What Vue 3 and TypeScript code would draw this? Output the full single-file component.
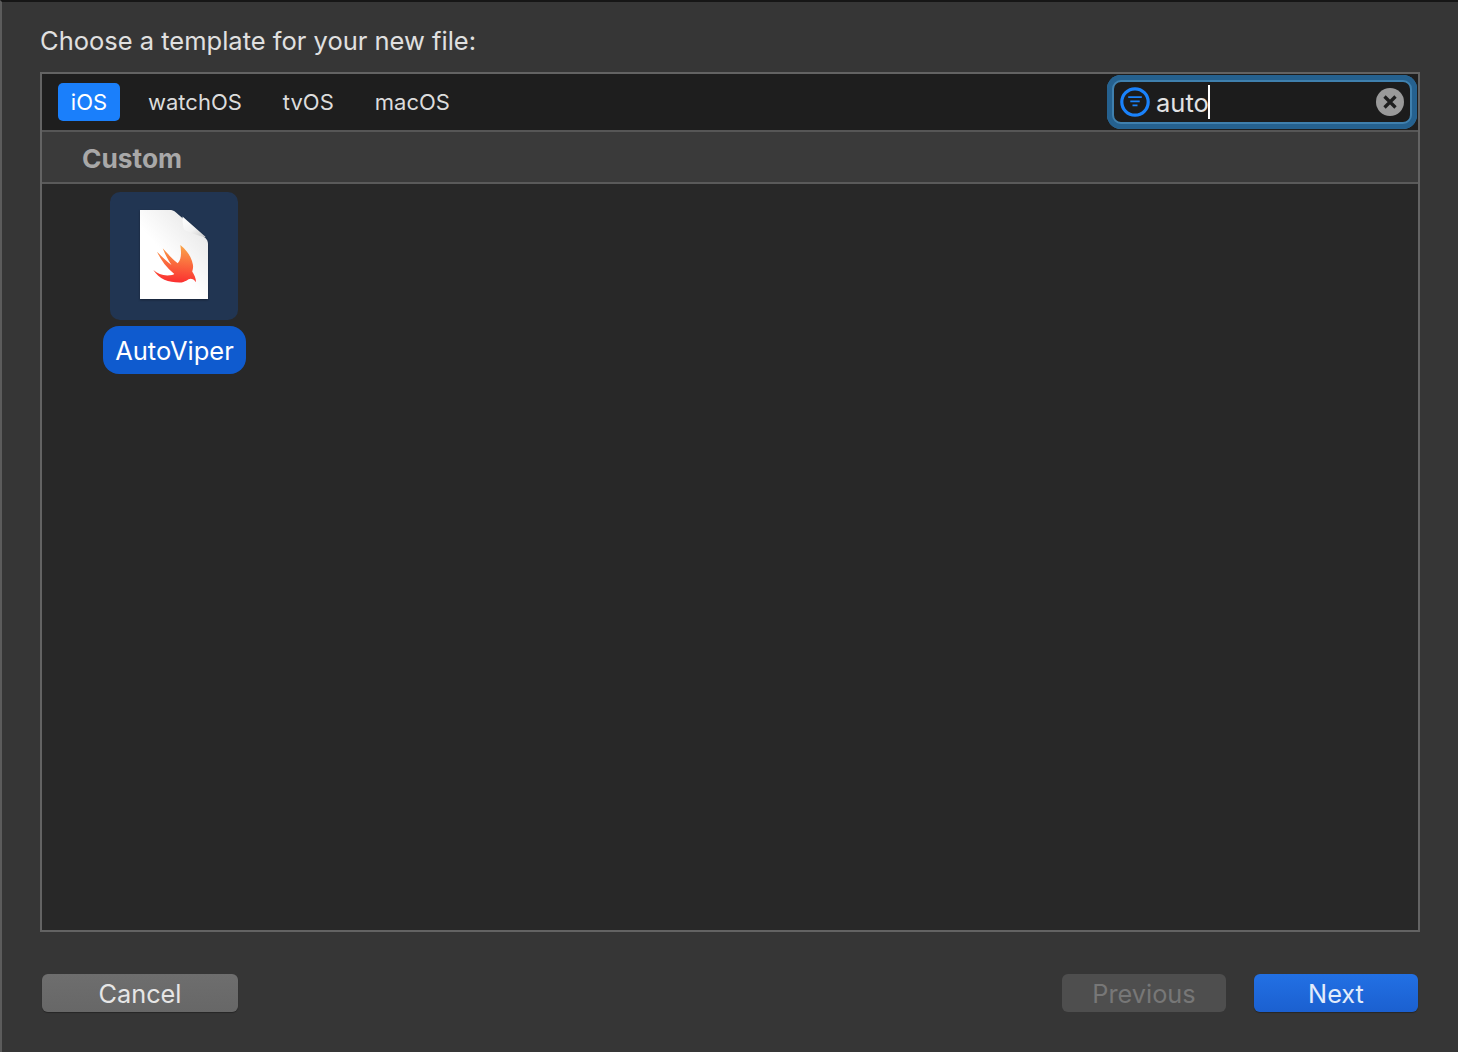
<script setup lang="ts">
const platforms: string[] = ['iOS', 'watchOS', 'tvOS', 'macOS']
</script>

<template>
  <div class="sheet">
    <h1 class="title">Choose a template for your new file:</h1>
    <section class="panel">
      <div class="tabbar">
        <div class="tabs">
          <span v-for="(p, i) in platforms" :key="p" class="tab" :class="{ active: i === 0 }">{{ p }}</span>
        </div>
        <div class="search">
          <svg class="filter" width="30" height="30" viewBox="0 0 30 30">
            <circle cx="15" cy="15" r="13.2" fill="none" stroke="#1a82fb" stroke-width="3.2" />
            <path d="M8.200 10.200h13.600M10.300 14.300h9.400M12.500 18.400h5" stroke="#1a82fb" stroke-width="1.800" fill="none" />
          </svg>
          <span class="query">auto<i class="caret"></i></span>
          <svg class="clear" width="28" height="28" viewBox="0 0 28 28">
            <circle cx="14" cy="14" r="14" fill="#9a9a9a" />
            <path d="M8.500 8.500l11 11M19.500 8.500l-11 11" stroke="#1e1e1e" stroke-width="3.300" fill="none" />
          </svg>
        </div>
      </div>
      <div class="group">Custom</div>
      <div class="grid">
        <div class="item">
          <div class="tile">
            <svg width="70" height="92" viewBox="0 0 70 92">
              <defs>
                <linearGradient id="swift" x1="0.6" y1="0" x2="0.5" y2="1">
                  <stop offset="0" stop-color="#faa64a" />
                  <stop offset="1" stop-color="#fb2e30" />
                </linearGradient>
                <linearGradient id="fold" x1="0" y1="0" x2="1" y2="1">
                  <stop offset="0" stop-color="#ffffff" />
                  <stop offset="0.55" stop-color="#f1f1f1" />
                  <stop offset="1" stop-color="#c8c8c8" />
                </linearGradient>
                <linearGradient id="page" x1="0.7" y1="0" x2="0.3" y2="0.45">
                  <stop offset="0" stop-color="#e9e9e9" />
                  <stop offset="1" stop-color="#ffffff" />
                </linearGradient>
              </defs>
              <path d="M1 1h29c3 0 5 .5 7 2.500l27 23.500c3 2.500 5 4 5 8V90H1z" fill="url(#page)" />
              <path d="M43.500 7.500L65 26.500c1 .8 1.500 1.200 1.800 1.800C60 27 50 23.500 45 20.500c-1-3.500-1.500-8.500-1.500-13z" fill="url(#fold)" />
              <path d="M41.300 36C48 41 53 49 54 56c.3 3-.3 5-.8 6.500 2 3 3.800 6.800 3.800 10.800-1.500-2.500-3.500-3.600-5.500-3.600-2.500 0-5 3.800-11 3.800-11 0-20.500-3.500-26.200-12.500 4 3 8.500 5.500 14 5.500 4 0 6.500-.8 7-1.500C28 59 22 51.500 18 42.700c5 5 10 9.800 14.500 13.300C29 51 26 45 23.700 39.300c5 5.500 10 11 15 15 3.500-3 4-10.500 2.600-18.300z" fill="url(#swift)" />
            </svg>
          </div>
          <div class="label">AutoViper</div>
        </div>
      </div>
    </section>
    <footer class="actions">
      <button class="btn cancel">Cancel</button>
      <div class="right">
        <button class="btn previous">Previous</button>
        <button class="btn next">Next</button>
      </div>
    </footer>
  </div>
</template>

<style>
html, body { margin: 0; background: #363636; }
</style>

<style scoped>
.sheet {
  box-sizing: border-box;
  width: 1458px;
  height: 1052px;
  overflow: hidden;
  display: flex;
  flex-direction: column;
  padding: 0 38px;
  background: #363636;
  border-top: 2px solid #161616;
  border-left: 2px solid #5c5c5c;
  font-family: Inter, "Liberation Sans", sans-serif;
}
.title {
  margin: 0;
  height: 70px;
  box-sizing: border-box;
  padding-top: 22.500px;
  font-size: 25.5px;
  line-height: 32px;
  font-weight: 400;
  color: #e0e0e0;
  white-space: nowrap;
}
.panel {
  box-sizing: border-box;
  width: 1380px;
  height: 860px;
  flex: none;
  display: flex;
  flex-direction: column;
  border: 2px solid #636363;
  background: #282828;
}
.tabbar {
  box-sizing: border-box;
  height: 58px;
  flex: none;
  display: flex;
  align-items: center;
  justify-content: space-between;
  padding: 0 1px 0 16px;
  background: #1e1e1e;
  border-bottom: 2px solid #565656;
}
.tabs {
  display: flex;
  align-items: center;
  gap: 41px;
}
.tab {
  padding-bottom: 1px;
  font-size: 22px;
  color: #dcdcdc;
}
.tab.active {
  box-sizing: border-box;
  width: 62px;
  height: 38px;
  display: flex;
  align-items: center;
  justify-content: center;
  margin-right: -13px;
  border-radius: 5px;
  background: #1a7ffb;
  color: #fff;
}
.search {
  box-sizing: border-box;
  width: 310px;
  height: 54px;
  display: flex;
  align-items: center;
  gap: 6px;
  padding: 0 13px;
  background: #1c1c1c;
  border-radius: 14px;
  box-shadow: inset 0 0 0 5px #25618f, inset 0 0 0 7px #3f80ae;
}
.filter { flex: none; }
.query {
  flex: 1;
  font-size: 25.5px;
  line-height: 34px;
  color: #e2e2e2;
}
.caret {
  display: inline-block;
  width: 2px;
  height: 34px;
  margin-left: -1px;
  vertical-align: -7px;
  background: #fff;
}
.clear { flex: none; }
.group {
  box-sizing: border-box;
  height: 52px;
  flex: none;
  padding: 2px 0 0 40px;
  display: flex;
  align-items: center;
  background: #3a3a3a;
  border-bottom: 2px solid #5a5a5a;
  font-size: 26.300px;
  font-weight: 700;
  color: #a8a8a8;
}
.grid {
  flex: 1;
  padding: 8px 0 0 61px;
  display: flex;
  align-items: flex-start;
}
.item {
  display: flex;
  flex-direction: column;
  gap: 6px;
}
.tile {
  width: 128px;
  height: 128px;
  margin-left: 7px;
  border-radius: 10px;
  background: #213552;
  display: flex;
  align-items: flex-start;
  justify-content: center;
}
.tile svg {
  margin-top: 17px;
  filter: drop-shadow(0 1px 1px rgba(0, 0, 0, 0.35));
}
.label {
  box-sizing: border-box;
  width: 143px;
  height: 48px;
  display: flex;
  align-items: center;
  justify-content: center;
  border-radius: 16px;
  background: #0f5bcf;
  color: #fff;
  font-size: 25.5px;
}
.actions {
  flex: 1;
  display: flex;
  align-items: flex-start;
  justify-content: space-between;
  padding: 42px 0 0 2px;
  width: 1376px;
}
.right { display: flex; gap: 28px; }
.btn {
  box-sizing: border-box;
  height: 38px;
  border: 0;
  padding: 2px 0 0;
  border-radius: 6px;
  font-family: inherit;
  font-size: 25.3px;
  line-height: 36px;
}
.cancel {
  width: 196px;
  background: linear-gradient(#6e6e6e, #676767);
  color: #e6e6e6;
  box-shadow: 0 1px 1px rgba(0, 0, 0, 0.3);
}
.previous {
  width: 164px;
  background: #4e4e4e;
  color: #777;
}
.next {
  width: 164px;
  background: linear-gradient(#2270e4, #1b60d0);
  color: #e2ecfb;
  box-shadow: 0 1px 1px rgba(0, 0, 0, 0.3);
}
</style>
